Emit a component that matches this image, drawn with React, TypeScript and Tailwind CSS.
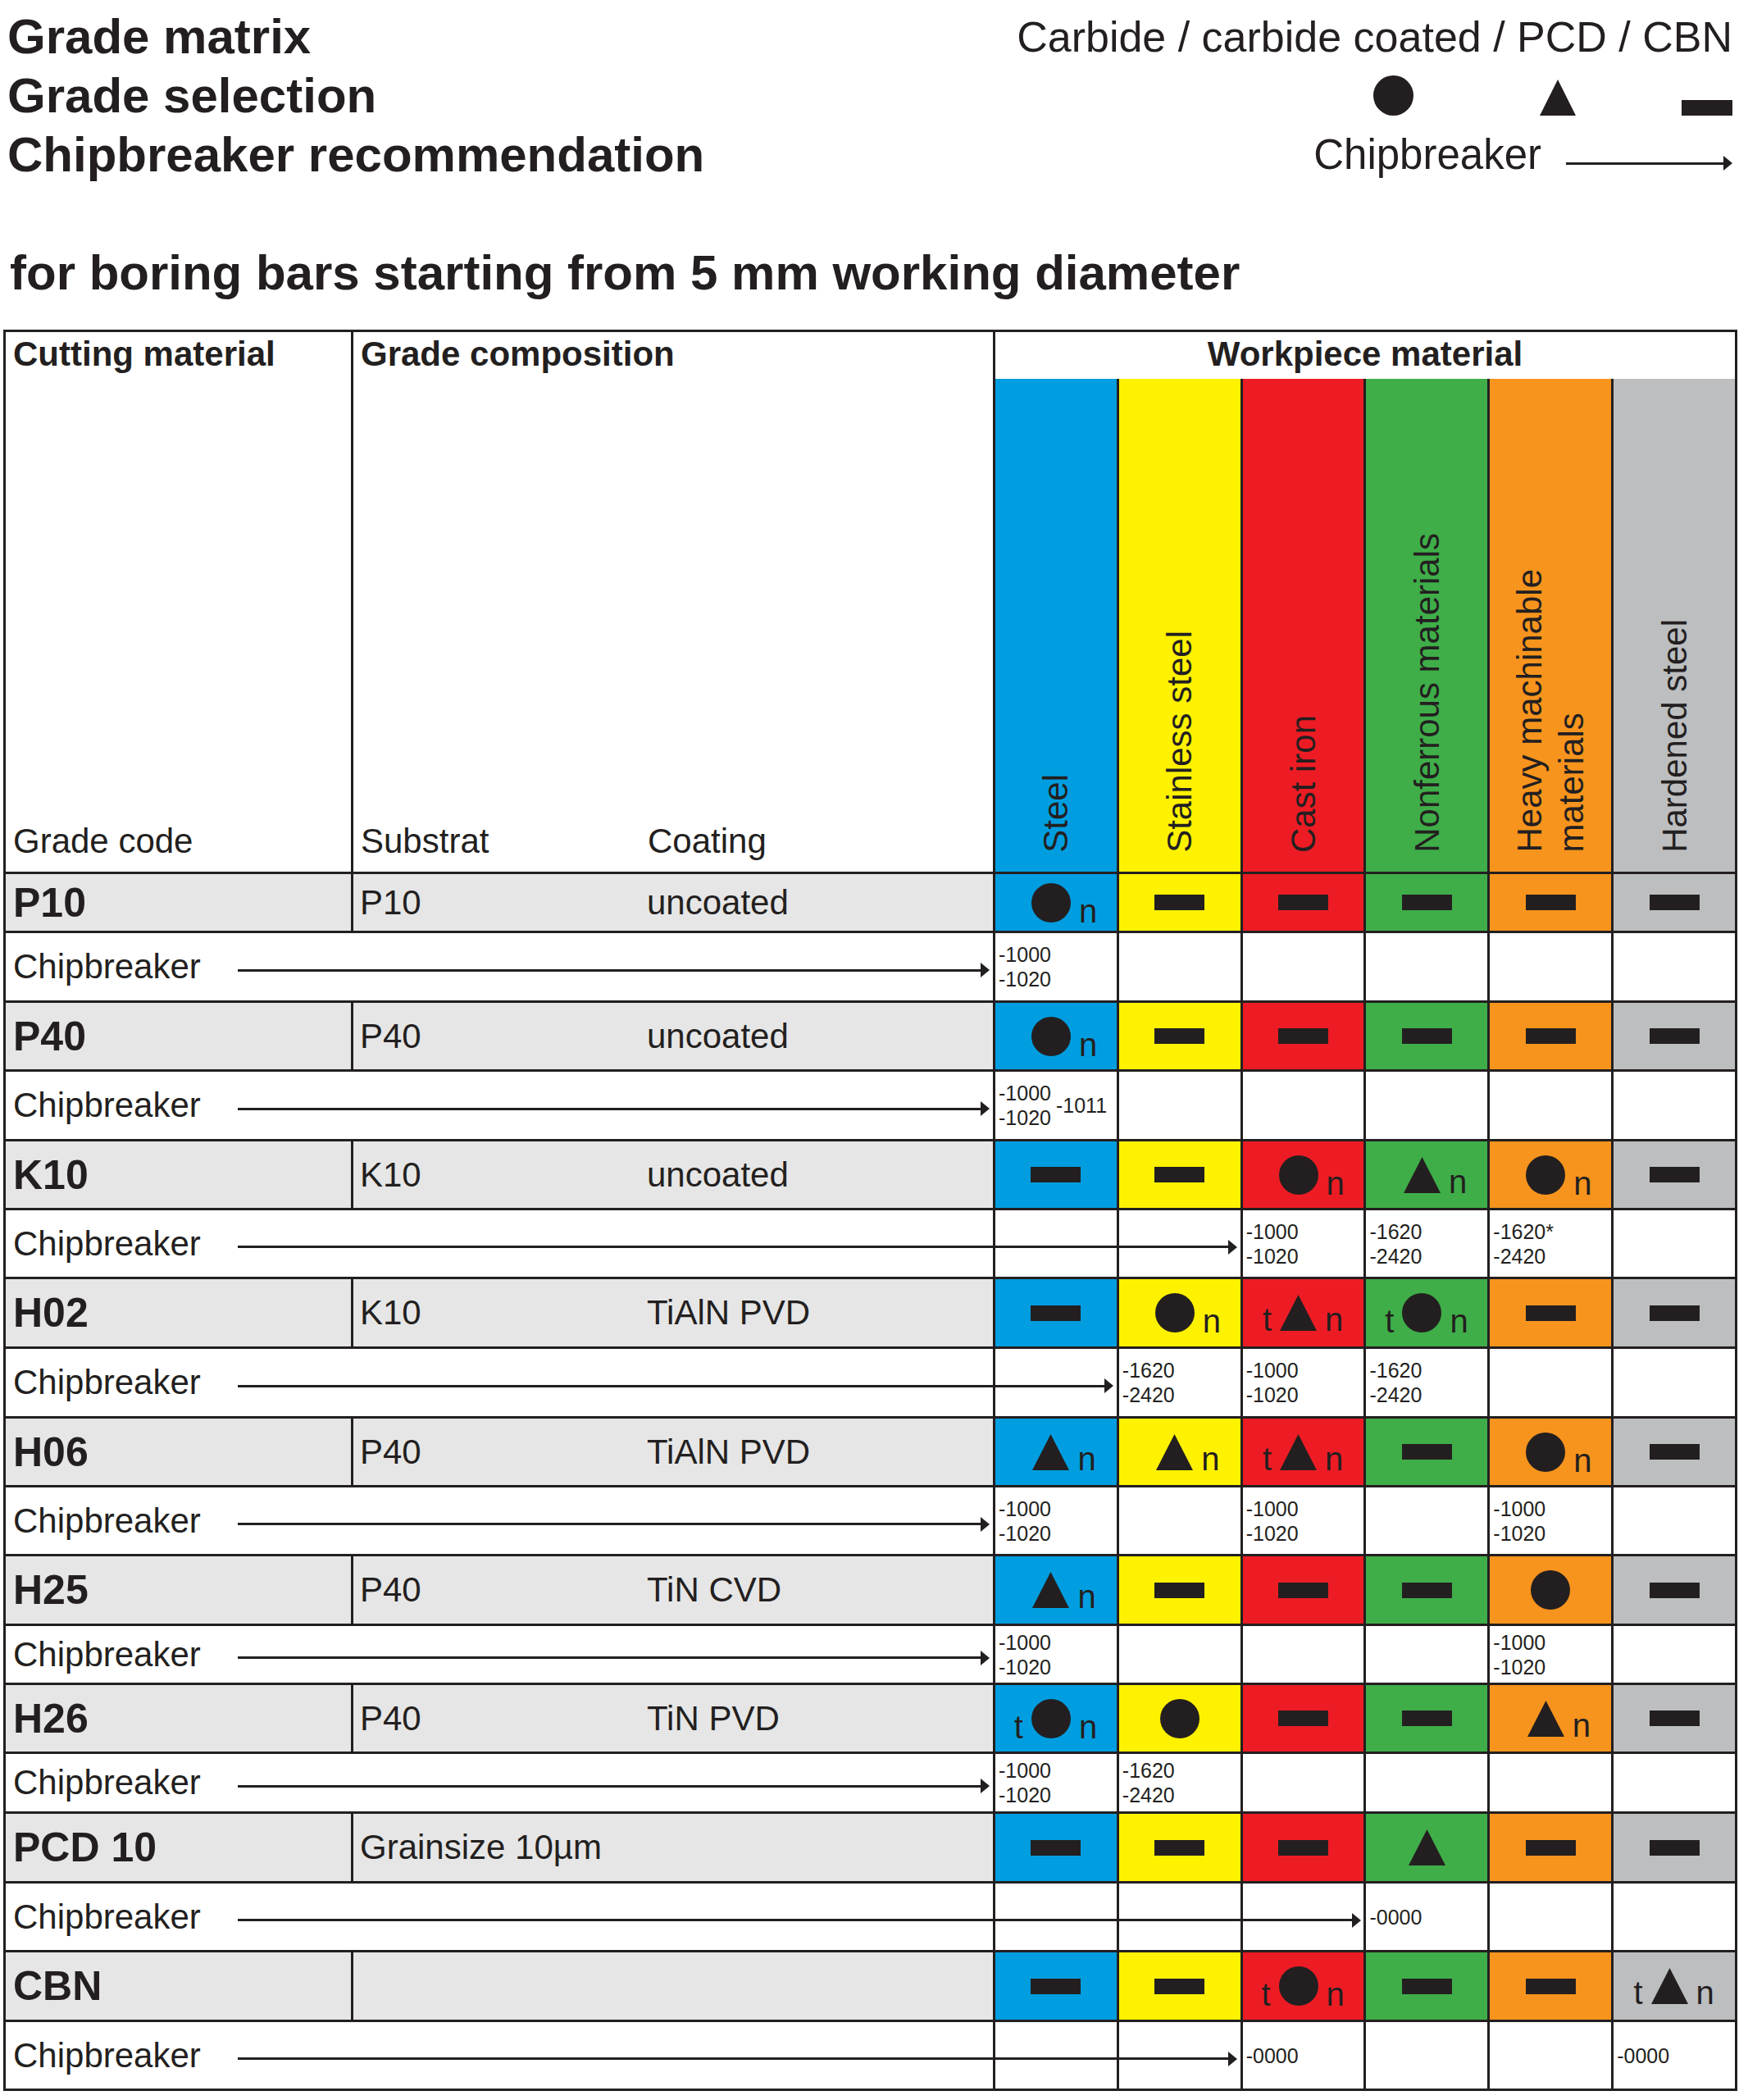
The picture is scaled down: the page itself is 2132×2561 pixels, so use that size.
const INK = "#231f20";
const GRID = "grid grid-cols-[421px_780px_repeat(6,minmax(0,1fr))] gap-x-[3px]";

const MATERIALS = [
  { label: ["Steel"], bg: "bg-[#009ee0]" },
  { label: ["Stainless steel"], bg: "bg-[#fff200]" },
  { label: ["Cast iron"], bg: "bg-[#ed1c24]" },
  { label: ["Nonferrous materials"], bg: "bg-[#3fae49]" },
  { label: ["Heavy machinable", "materials"], bg: "bg-[#f7941d]" },
  { label: ["Hardened steel"], bg: "bg-[#bcbec0]" },
];

interface Grade {
  code: string;
  sub?: string;
  coat?: string;
  span?: string;
  h: string;
  marks: string[];
  cbH: string;
  arrow: string;
  codes: string[][][];
}

// marks: C circle, T triangle, R dash; leading t / trailing n are the small letters
const GRADES: Grade[] = [
  {
    code: "P10", sub: "P10", coat: "uncoated", h: "h-[69px]",
    marks: ["Cn", "R", "R", "R", "R", "R"],
    cbH: "h-[82px]", arrow: "w-[917px]",
    codes: [[["-1000", "-1020"]], [], [], [], [], []],
  },
  {
    code: "P40", sub: "P40", coat: "uncoated", h: "h-[81px]",
    marks: ["Cn", "R", "R", "R", "R", "R"],
    cbH: "h-[82px]", arrow: "w-[917px]",
    codes: [[["-1000", "-1020"], ["-1011"]], [], [], [], [], []],
  },
  {
    code: "K10", sub: "K10", coat: "uncoated", h: "h-[81px]",
    marks: ["R", "R", "Cn", "Tn", "Cn", "R"],
    cbH: "h-[81px]", arrow: "w-[1219px]",
    codes: [[], [], [["-1000", "-1020"]], [["-1620", "-2420"]], [["-1620*", "-2420"]], []],
  },
  {
    code: "H02", sub: "K10", coat: "TiAlN PVD", h: "h-[82px]",
    marks: ["R", "Cn", "tTn", "tCn", "R", "R"],
    cbH: "h-[82px]", arrow: "w-[1068px]",
    codes: [[], [["-1620", "-2420"]], [["-1000", "-1020"]], [["-1620", "-2420"]], [], []],
  },
  {
    code: "H06", sub: "P40", coat: "TiAlN PVD", h: "h-[81px]",
    marks: ["Tn", "Tn", "tTn", "R", "Cn", "R"],
    cbH: "h-[81px]", arrow: "w-[917px]",
    codes: [[["-1000", "-1020"]], [], [["-1000", "-1020"]], [], [["-1000", "-1020"]], []],
  },
  {
    code: "H25", sub: "P40", coat: "TiN CVD", h: "h-[82px]",
    marks: ["Tn", "R", "R", "R", "C", "R"],
    cbH: "h-[69px]", arrow: "w-[917px]",
    codes: [[["-1000", "-1020"]], [], [], [], [["-1000", "-1020"]], []],
  },
  {
    code: "H26", sub: "P40", coat: "TiN PVD", h: "h-[81px]",
    marks: ["tCn", "C", "R", "R", "Tn", "R"],
    cbH: "h-[70px]", arrow: "w-[917px]",
    codes: [[["-1000", "-1020"]], [["-1620", "-2420"]], [], [], [], []],
  },
  {
    code: "PCD 10", span: "Grainsize 10µm", h: "h-[82px]",
    marks: ["R", "R", "R", "T", "R", "R"],
    cbH: "h-[81px]", arrow: "w-[1370px]",
    codes: [[], [], [], [["-0000"]], [], []],
  },
  {
    code: "CBN", h: "h-[82px]",
    marks: ["R", "R", "tCn", "R", "R", "tTn"],
    cbH: "h-[81px]", arrow: "w-[1219px]",
    codes: [[], [], [["-0000"]], [], [], [["-0000"]]],
  },
];

function Shape({ s, big }: { s: string; big?: boolean }) {
  if (s === "C") {
    return <span className={`block rounded-full bg-[#231f20] ${big ? "h-[49px] w-[49px]" : "h-[48px] w-[48px]"}`} />;
  }
  if (s === "T") {
    return big ? (
      <svg width="44" height="44" viewBox="0 0 44 44" className="block">
        <polygon points="22,0 44,44 0,44" fill={INK} />
      </svg>
    ) : (
      <svg width="45" height="44" viewBox="0 0 45 44" className="block">
        <polygon points="22.5,0 45,44 0,44" fill={INK} />
      </svg>
    );
  }
  return <span className={`block bg-[#231f20] ${big ? "h-[19px] w-[62px]" : "h-[19px] w-[61px]"}`} />;
}

function Mark({ m }: { m: string }) {
  const t = m.startsWith("t");
  const n = m.endsWith("n");
  const s = m.replace(/^t/, "").replace(/n$/, "");
  if (!t && !n) return <Shape s={s} />;
  return (
    <div className={`grid w-full grid-cols-[1fr_auto_1fr] items-end gap-x-[10px] ${n ? "pr-[12px]" : ""}`}>
      <span className="translate-y-[6px] justify-self-end text-[40px] leading-none">{t ? "t" : ""}</span>
      <Shape s={s} />
      <span className="translate-y-[6px] justify-self-start text-[40px] leading-none">{n ? "n" : ""}</span>
    </div>
  );
}

function Arrow({ className }: { className: string }) {
  return (
    <div className={`flex items-center ${className}`}>
      <div className="h-[3px] flex-1 bg-[#231f20]" />
      <svg width="11" height="18" viewBox="0 0 11 18" className="-ml-px block shrink-0">
        <polygon points="0,0 11,9 0,18" fill={INK} />
      </svg>
    </div>
  );
}

function CodeCell({ cols }: { cols: string[][] }) {
  return (
    <div className="flex items-center gap-x-[6px] bg-white pl-[4px] text-[25px] leading-[30px]">
      {cols.map((lines, i) => (
        <div key={i} className="flex flex-col">
          {lines.map((l) => (
            <span key={l}>{l}</span>
          ))}
        </div>
      ))}
    </div>
  );
}

function HeaderRow() {
  return (
    <div className={`${GRID} h-[658px]`}>
      <div className="flex flex-col justify-between bg-white pb-[13px] pl-[9px] pt-[3px] text-[42px] leading-[48px]">
        <span className="font-bold">Cutting material</span>
        <span>Grade code</span>
      </div>
      <div className="flex flex-col justify-between bg-white pb-[13px] pl-[9px] pt-[3px] text-[42px] leading-[48px]">
        <span className="font-bold">Grade composition</span>
        <div className="grid grid-cols-[350px_1fr]">
          <span>Substrat</span>
          <span>Coating</span>
        </div>
      </div>
      <div className="col-span-6 flex flex-col bg-white">
        <div className="h-[57px] pt-[3px] text-center text-[42px] font-bold leading-[48px]">Workpiece material</div>
        <div className="flex flex-1 gap-x-[3px] bg-[#231f20]">
          {MATERIALS.map((m) => (
            <div key={m.label[0]} className={`flex flex-1 flex-col items-center justify-end pb-[23px] ${m.bg}`}>
              <span className="rotate-180 whitespace-nowrap text-[42px] leading-[51px] [writing-mode:vertical-rl]">
                {m.label.map((l, i) => (
                  <span key={l}>
                    {i > 0 && <br />}
                    {l}
                  </span>
                ))}
              </span>
            </div>
          ))}
        </div>
      </div>
    </div>
  );
}

function GradeRows({ g }: { g: Grade }) {
  return (
    <>
      <div className={`${GRID} ${g.h}`}>
        <div className="flex items-center bg-[#e6e6e6] pl-[9px] text-[50px] font-bold leading-none">{g.code}</div>
        {g.span !== undefined || !g.sub ? (
          <div className="flex items-center bg-[#e6e6e6] pl-[8px] text-[42px] leading-none">{g.span ?? ""}</div>
        ) : (
          <div className="grid grid-cols-[350px_1fr] items-center bg-[#e6e6e6] pl-[8px] text-[42px] leading-none">
            <span>{g.sub}</span>
            <span>{g.coat}</span>
          </div>
        )}
        {g.marks.map((m, i) => (
          <div key={i} className={`flex items-center justify-center ${MATERIALS[i].bg}`}>
            <Mark m={m} />
          </div>
        ))}
      </div>
      <div className={`relative ${GRID} ${g.cbH}`}>
        <div className="col-span-2 flex items-center bg-white pl-[9px] text-[42px] leading-none">Chipbreaker</div>
        {g.codes.map((c, i) => (
          <CodeCell key={i} cols={c} />
        ))}
        <Arrow className={`absolute left-[283px] top-[calc(50%-5px)] h-[18px] ${g.arrow}`} />
      </div>
    </>
  );
}

export default function App() {
  return (
    <div className="min-h-[2561px] w-[2132px] bg-white font-['Liberation_Sans','Helvetica_Neue',Arial,sans-serif] text-[#231f20]">
      <header className="flex justify-between pl-[9px] pr-[19px] pt-[9px]">
        <div className="text-[60px] font-bold leading-[72px]">
          <div>Grade matrix</div>
          <div>Grade selection</div>
          <div>Chipbreaker recommendation</div>
        </div>
        <div className="flex flex-col items-end text-[51px] leading-[72px]">
          <div className="text-[52px]">Carbide / carbide coated / PCD / CBN</div>
          <div className="flex h-[72px] items-end pb-[12px]">
            <Shape s="C" big />
            <span className="ml-[154px]">
              <Shape s="T" big />
            </span>
            <span className="ml-[129px]">
              <Shape s="R" big />
            </span>
          </div>
          <div className="flex h-[72px] items-start">
            <span>Chipbreaker</span>
            <Arrow className="ml-[30px] mt-[38px] h-[16px] w-[203px]" />
          </div>
        </div>
      </header>

      <h2 className="mt-[72px] pl-[12px] text-[60px] font-bold leading-[72px]">
        for boring bars starting from 5 mm working diameter
      </h2>

      <div className="ml-[4px] mt-[33px] flex w-[2115px] flex-col gap-y-[3px] bg-[#231f20] p-[3px]">
        <HeaderRow />
        {GRADES.map((g) => (
          <GradeRows key={g.code} g={g} />
        ))}
      </div>
    </div>
  );
}
